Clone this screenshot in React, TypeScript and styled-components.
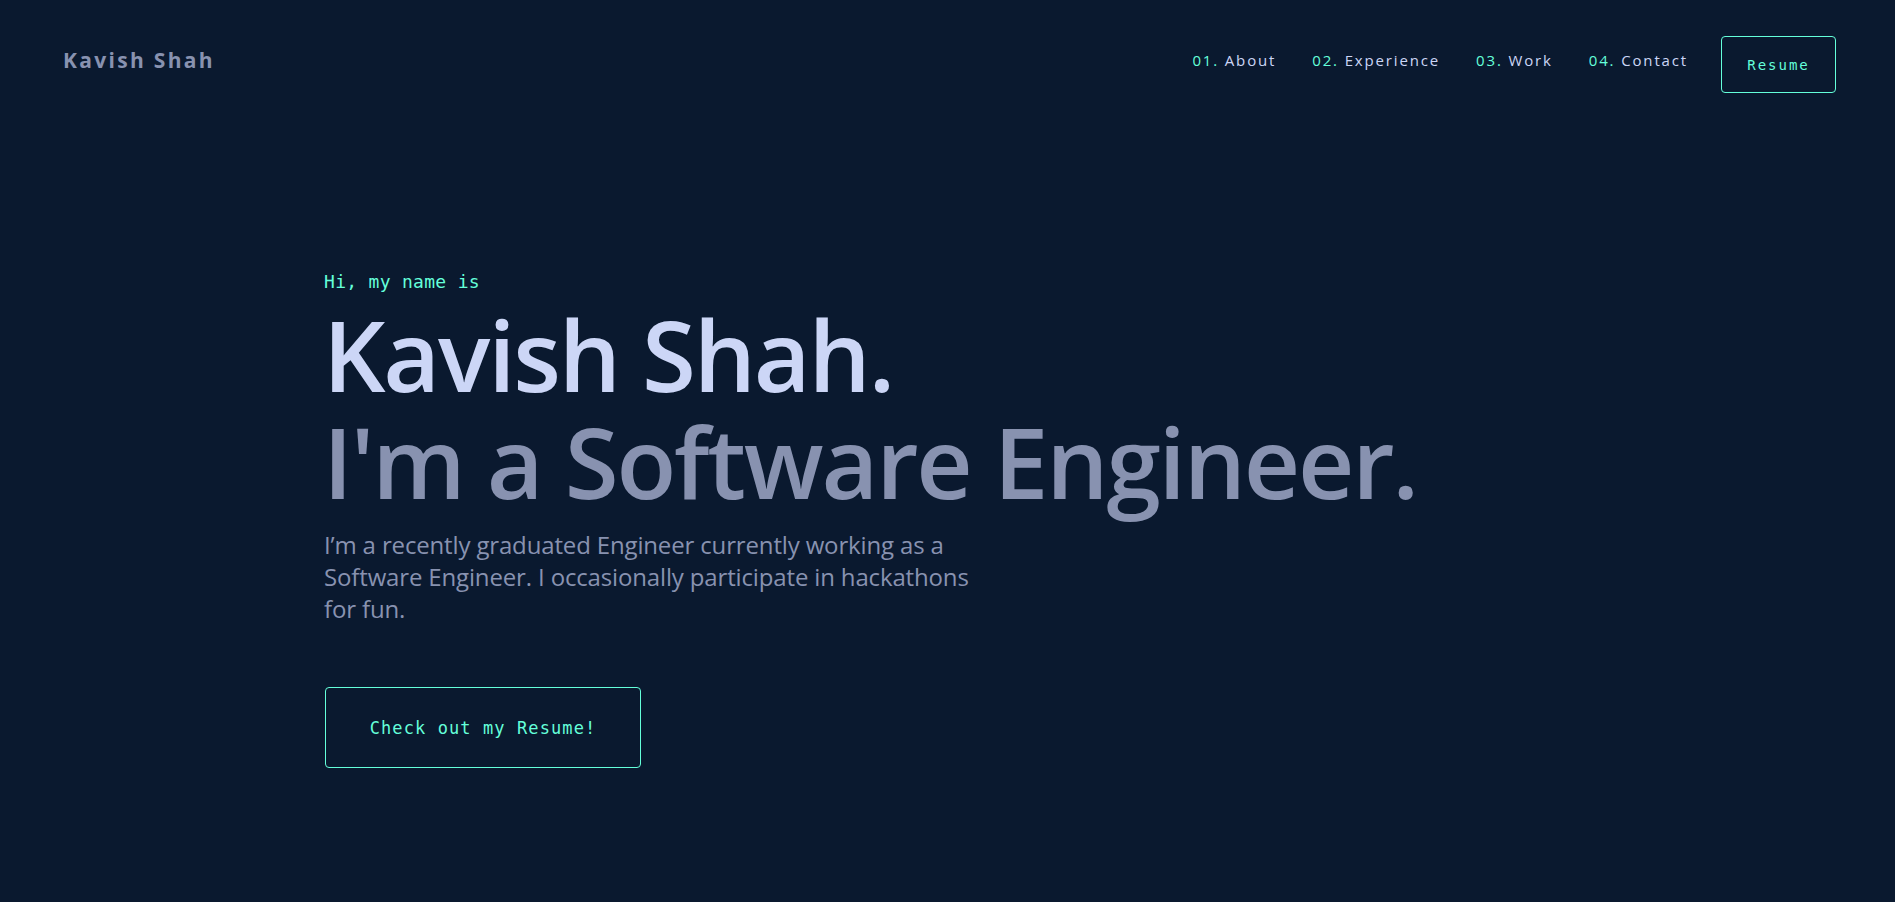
import React from "react";
import styled, { createGlobalStyle } from "styled-components";

const GlobalStyle = createGlobalStyle`
  html, body {
    margin: 0;
    padding: 0;
    background: #0a192f;
  }
  body {
    font-family: "Open Sans", "Noto Sans", sans-serif;
    color: #8892b0;
    -webkit-font-smoothing: antialiased;
  }
  * { box-sizing: border-box; }
`;

const Page = styled.div`
  min-height: 100vh;
  background: #0a192f;
`;

const Header = styled.header`
  display: flex;
  align-items: center;
  justify-content: space-between;
  padding: 36px 59px 0 63px;
`;

const Logo = styled.a`
  font-family: "Open Sans", sans-serif;
  font-weight: 700;
  font-size: 21px;
  letter-spacing: 2.3px;
  color: #8892b0;
  text-decoration: none;
  margin-bottom: 9px;
`;

const Nav = styled.nav`
  display: flex;
  align-items: center;
`;

const NavList = styled.ol`
  display: flex;
  align-items: center;
  gap: 36px;
  list-style: none;
  margin: 0 33px 9px 0;
  padding: 0;
`;

const NavLink = styled.a`
  font-family: "Open Sans", sans-serif;
  font-size: 15px;
  letter-spacing: 1.85px;
  color: #ccd6f6;
  text-decoration: none;
`;

const Num = styled.span`
  color: #64ffda;
`;

const OutlineButton = styled.a<{ $size: "sm" | "lg" }>`
  display: inline-flex;
  align-items: center;
  justify-content: center;
  border: 1px solid #64ffda;
  border-radius: 4px;
  color: #64ffda;
  text-decoration: none;
  font-family: "DejaVu Sans Mono", "Liberation Mono", monospace;
  font-size: ${(p) => (p.$size === "sm" ? "14px" : "17px")};
  letter-spacing: ${(p) => (p.$size === "sm" ? "2px" : "1.1px")};
  width: ${(p) => (p.$size === "sm" ? "115px" : "316px")};
  height: ${(p) => (p.$size === "sm" ? "57px" : "81px")};
`;

const Hero = styled.section`
  padding: 178px 0 0 324px;
  display: flex;
  flex-direction: column;
  align-items: flex-start;
`;

const Greeting = styled.p`
  margin: 0;
  font-family: "DejaVu Sans Mono", "Liberation Mono", monospace;
  font-size: 18px;
  line-height: 21px;
  letter-spacing: 0.3px;
  color: #64ffda;
`;

const TitleBlock = styled.div`
  margin-top: 9px;
  display: flex;
  flex-direction: column;
`;

const BigTitle = styled.h1<{ $muted?: boolean }>`
  margin: 0 0 0 -1px;
  font-family: "Open Sans", sans-serif;
  font-weight: 600;
  font-size: 98px;
  line-height: 107px;
  letter-spacing: -2.2px;
  color: ${(p) => (p.$muted ? "#8892b0" : "#ccd6f6")};
`;

const Intro = styled.p`
  margin: 14px 0 0 0;
  max-width: 680px;
  font-family: "Open Sans", sans-serif;
  font-size: 24px;
  line-height: 32px;
  letter-spacing: -0.15px;
  color: #8892b0;
`;

const CtaWrap = styled.div`
  margin-top: 62px;
  margin-left: 1px;
`;

export default function App() {
  return (
    <Page>
      <GlobalStyle />
      <Header>
        <Logo href="#">Kavish Shah</Logo>
        <Nav>
          <NavList>
            <li><NavLink href="#about"><Num>01. </Num>About</NavLink></li>
            <li><NavLink href="#experience"><Num>02. </Num>Experience</NavLink></li>
            <li><NavLink href="#work"><Num>03. </Num>Work</NavLink></li>
            <li><NavLink href="#contact"><Num>04. </Num>Contact</NavLink></li>
          </NavList>
          <OutlineButton $size="sm" href="#">Resume</OutlineButton>
        </Nav>
      </Header>
      <Hero>
        <Greeting>Hi, my name is</Greeting>
        <TitleBlock>
          <BigTitle>Kavish Shah.</BigTitle>
          <BigTitle as="h2" $muted>I'm a Software Engineer.</BigTitle>
        </TitleBlock>
        <Intro>
          I’m a recently graduated Engineer currently working as a Software
          Engineer. I occasionally participate in hackathons for fun.
        </Intro>
        <CtaWrap>
          <OutlineButton $size="lg" href="#">Check out my Resume!</OutlineButton>
        </CtaWrap>
      </Hero>
    </Page>
  );
}
